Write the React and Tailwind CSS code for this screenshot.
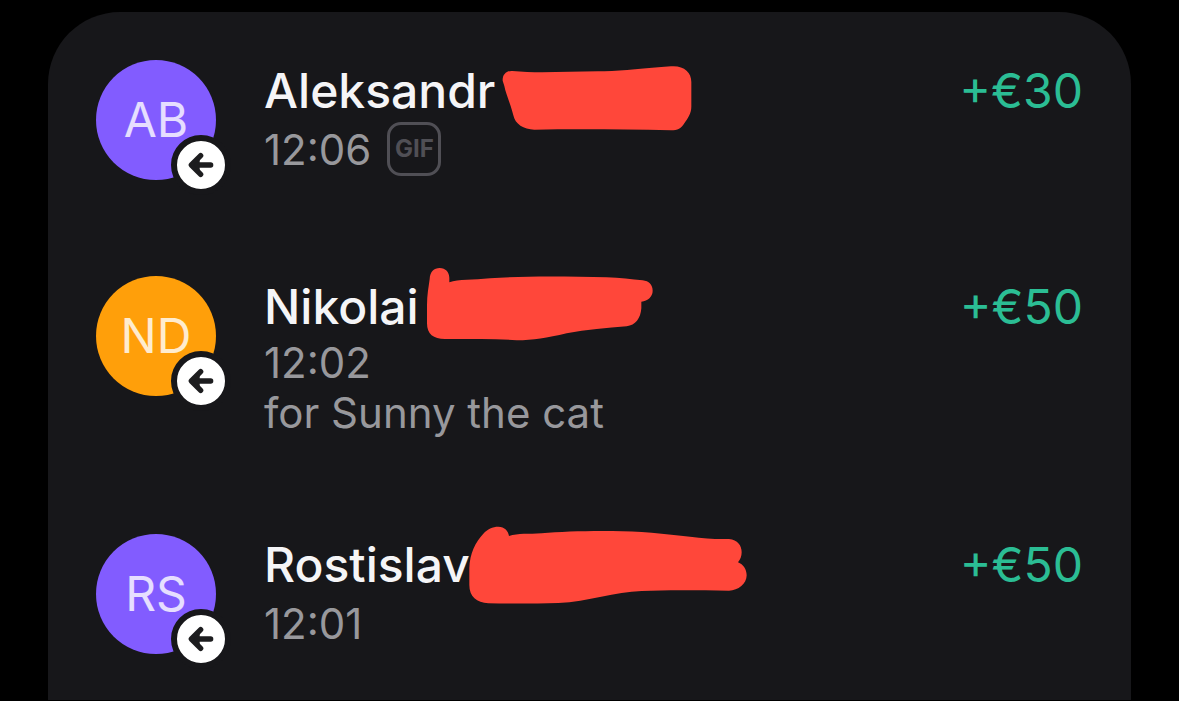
const TRANSACTIONS = [
  {
    name: 'Aleksandr',
    initials: 'AB',
    color: 'bg-[#825cff]',
    time: '12:06',
    gif: true,
    amount: '+€30',
    mark: {
      className: 'ml-1.5 w-48',
      viewBox: '30 6 576 240',
      path: 'M35 92C34 74 46 62 64 63C150 71 240 63 340 64C400 63 460 54 540 49C578 46 601 66 601 96V170C601 190 590 205 580 220C571 236 560 241 540 241C400 238 260 237 130 239C98 239 72 222 67 196C58 160 44 130 40 108Z',
    },
  },
  {
    name: 'Nikolai',
    initials: 'ND',
    color: 'bg-[#ff9f0a]',
    time: '12:02',
    note: 'for Sunny the cat',
    amount: '+€50',
    mark: {
      className: 'ml-1.5 w-[230px]',
      viewBox: '45 39 690 240',
      path: 'M59 72C60 50 72 39 89 39C107 39 118 52 118 68V82C145 73 190 75 240 70C340 62 480 64 590 67C630 68 665 73 698 76C717 78 728 90 728 107C728 125 714 137 694 140V160C692 190 676 211 650 214C590 219 530 223 470 235C410 249 370 256 320 256C250 249 180 253 105 252C70 252 51 238 51 205V150C51 120 56 95 59 72Z',
    },
  },
  {
    name: 'Rostislav',
    initials: 'RS',
    color: 'bg-[#825cff]',
    time: '12:01',
    amount: '+€50',
    mark: {
      className: '-ml-0.5 w-[280px]',
      viewBox: '39 33 840 240',
      path: 'M43 160C44 115 62 80 85 56C98 42 112 35 130 35C149 36 160 47 162 63C190 54 220 58 260 55C340 48 460 46 560 51C640 56 720 69 780 72H822C848 74 860 92 860 112C860 124 856 134 849 142C865 149 875 162 875 181C875 206 850 227 822 227C740 226 640 224 560 228C480 230 400 260 310 264C240 266 170 266 100 265C65 262 43 245 43 210Z',
    },
  },
];

function IncomingBadge() {
  return (
    <span className="absolute -right-[15px] -bottom-[15px] size-[60px] rounded-full border-6 border-[#17171a] bg-white">
      <svg
        viewBox="0 0 144 144"
        className="size-12"
        fill="none"
        stroke="#1d1d1f"
        strokeWidth="16"
        strokeLinecap="round"
        strokeLinejoin="round"
        aria-hidden="true"
      >
        <path d="M71 44L43 72L71 100M46 72H101" />
        <path d="M48 72L68 54V90Z" fill="#1d1d1f" stroke="none" />
      </svg>
    </span>
  );
}

function Transaction({ item }) {
  return (
    <li className="flex items-start gap-12">
      <div
        className={`relative flex size-30 shrink-0 items-center justify-center rounded-full text-[48px] leading-[62px] text-white/80 ${item.color}`}
      >
        {item.initials}
        <IncomingBadge />
      </div>
      <div className="flex min-w-0 flex-1 flex-col items-start">
        <h2 className="relative text-[48px] leading-[62px] font-medium text-[#f5f5f7]">
          {item.name}
          <svg
            viewBox={item.mark.viewBox}
            className={`absolute -top-2 left-full h-20 max-w-none ${item.mark.className}`}
            fill="#ff473a"
            aria-hidden="true"
          >
            <path d={item.mark.path} />
          </svg>
        </h2>
        {item.note ? (
          <div className="text-[42px] leading-[50px] text-[#98989c]">
            <p>{item.time}</p>
            <p>{item.note}</p>
          </div>
        ) : (
          <div className="flex h-[54px] items-center gap-4 text-[42px] text-[#98989c]">
            <p>{item.time}</p>
            {item.gif && (
              <span className="flex size-[54px] items-center justify-center rounded-[14px] border-3 border-[#504f55] text-[24px] font-bold text-[#504f55]">
                GIF
              </span>
            )}
          </div>
        )}
      </div>
      <p className="text-[48px] leading-[62px] text-[#2bbd94]">{item.amount}</p>
    </li>
  );
}

export default function App() {
  return (
    <main className="flex min-h-screen flex-col bg-black px-12 pt-3 pb-px font-['Inter','Liberation_Sans',sans-serif]">
      <ul className="flex flex-1 flex-col gap-24 rounded-t-[72px] bg-[#17171a] px-12 pt-12 pb-8">
        {TRANSACTIONS.map((item) => (
          <Transaction key={item.name} item={item} />
        ))}
      </ul>
    </main>
  );
}
